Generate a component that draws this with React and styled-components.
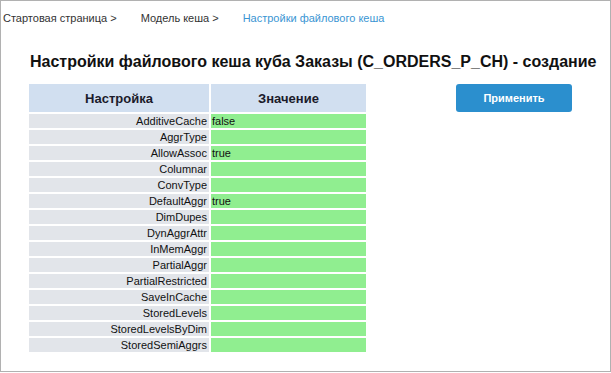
import React from 'react'
import styled, { createGlobalStyle } from 'styled-components'

const rows = [
  ['AdditiveCache', 'false'],
  ['AggrType', ''],
  ['AllowAssoc', 'true'],
  ['Columnar', ''],
  ['ConvType', ''],
  ['DefaultAggr', 'true'],
  ['DimDupes', ''],
  ['DynAggrAttr', ''],
  ['InMemAggr', ''],
  ['PartialAggr', ''],
  ['PartialRestricted', ''],
  ['SaveInCache', ''],
  ['StoredLevels', ''],
  ['StoredLevelsByDim', ''],
  ['StoredSemiAggrs', ''],
]

export default function App() {
  return (
    <>
      <GlobalStyle />
      <Frame>
        <Crumbs>
          <Crumb>Стартовая страница &gt;</Crumb>
          <Crumb>Модель кеша &gt;</Crumb>
          <Crumb current>Настройки файлового кеша</Crumb>
        </Crumbs>
        <Title>Настройки файлового кеша куба Заказы (C_ORDERS_P_CH) - создание</Title>
        <Body>
          <Grid>
            <thead>
              <tr>
                <HeadCell style={{ width: 180 }}>Настройка</HeadCell>
                <HeadCell style={{ width: 155 }}>Значение</HeadCell>
              </tr>
            </thead>
            <tbody>
              {rows.map(([name, value]) => (
                <tr key={name}>
                  <NameCell>{name}</NameCell>
                  <ValueCell>{value}</ValueCell>
                </tr>
              ))}
            </tbody>
          </Grid>
          <ApplyButton>Применить</ApplyButton>
        </Body>
      </Frame>
    </>
  )
}

const GlobalStyle = createGlobalStyle`
  body {
    margin: 0;
    background: #fff;
    font-family: "Liberation Sans", Arial, sans-serif;
  }
`

const Frame = styled.div`
  box-sizing: border-box;
  width: 611px;
  height: 372px;
  border: 1px solid #b1b1b1;
  background: #fff;
`

const Crumbs = styled.div`
  display: flex;
  gap: 24px;
  padding: 10px 0 0 2px;
  height: 14px;
  font-size: 11px;
  line-height: 14px;
`

const Crumb = styled.span`
  color: ${p => (p.current ? '#3a95d3' : '#333')};
`

const Title = styled.h1`
  margin: 27px 0 0 29px;
  font-size: 16px;
  line-height: 20px;
  font-weight: bold;
  color: #111;
  white-space: nowrap;
`

const Body = styled.div`
  display: flex;
  align-items: flex-start;
  gap: 88px;
  margin: 10px 0 0 26px;
`

const Grid = styled.table`
  border-collapse: separate;
  border-spacing: 2px;
  table-layout: fixed;
  font-family: "Liberation Sans", Arial, sans-serif;
  font-size: 11px;
`

const HeadCell = styled.th`
  height: 28px;
  padding: 0;
  background: #d1dff0;
  color: #1b1b2b;
  font-size: 13px;
  font-weight: bold;
  text-align: center;
`

const NameCell = styled.td`
  height: 14px;
  padding: 0 2px 0 0;
  line-height: 14px;
  background: #e2e5ea;
  color: #111;
  text-align: right;
`

const ValueCell = styled.td`
  height: 14px;
  padding: 0 0 0 1px;
  line-height: 14px;
  background: #90ee90;
  color: #111;
`

const ApplyButton = styled.button`
  margin-top: 2px;
  width: 116px;
  height: 28px;
  border: none;
  border-radius: 3px;
  background: #2b8fce;
  color: #fff;
  font-family: "Liberation Sans", Arial, sans-serif;
  font-size: 11px;
  font-weight: bold;
  cursor: pointer;
`
